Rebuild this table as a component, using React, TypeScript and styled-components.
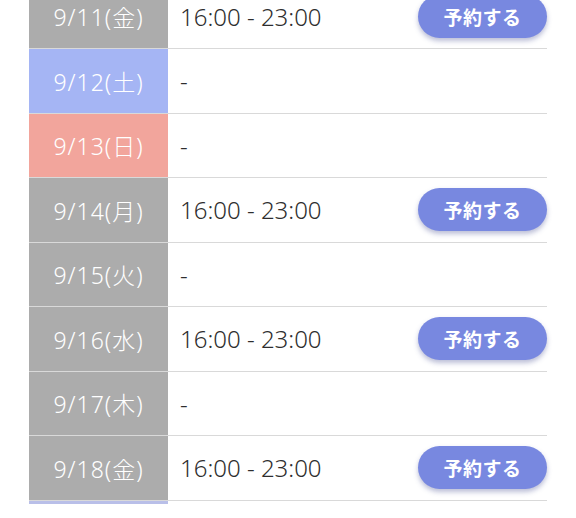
import React from "react";
import styled, { createGlobalStyle } from "styled-components";

const Global = createGlobalStyle`
  html, body { margin: 0; padding: 0; background: #fff; }
  body { width: 576px; height: 518px; overflow: hidden; font-family: "Noto Sans", "Noto Sans CJK JP", sans-serif; }
`;

const Page = styled.div`
  width: 576px;
  height: 518px;
  overflow: hidden;
  padding: 0 29px 0 29px;
  box-sizing: border-box;
`;

const Table = styled.div`
  margin-top: -15.5px;
  display: flex;
  flex-direction: column;
  width: 518px;
`;

type Kind = "weekday" | "sat" | "sun";

const dateBg: Record<Kind, string> = {
  weekday: "#acacac",
  sat: "#a5b5f4",
  sun: "#f2a59c",
};

const Row = styled.div`
  display: grid;
  grid-template-columns: 139px 1fr;
  height: 64.5px;
  box-sizing: border-box;
  border-bottom: 1px solid #d9d9d9;
  flex: none;
`;

const DateCell = styled.div<{ $kind: Kind }>`
  background: ${(p) => dateBg[p.$kind]};
  color: #fff;
  font-family: "Noto Sans", "Noto Sans CJK JP", sans-serif;
  font-size: 23px;
  font-weight: 300;
  letter-spacing: 1px;
  display: flex;
  align-items: center;
  justify-content: center;
`;

const Content = styled.div`
  display: flex;
  align-items: center;
  justify-content: space-between;
  padding-left: 12px;
  color: #2e2e2e;
  font-family: "Noto Sans", "Noto Sans CJK JP", sans-serif;
  font-size: 24px;
  font-weight: 350;
`;

const ReserveButton = styled.button`
  width: 129px;
  height: 43px;
  border: none;
  border-radius: 22px;
  background: #7888e0;
  color: #fff;
  font-family: "Noto Sans CJK JP", sans-serif;
  font-size: 19px;
  font-weight: 700;
  letter-spacing: 0.5px;
  box-shadow: 0 3px 5px rgba(60, 70, 140, 0.35);
  cursor: pointer;
  padding: 0;
`;

const Tail = styled.div`
  height: 3px;
  width: 139px;
  background: #b9bfe8;
`;

type Day = { date: string; kind: Kind; time?: string };

const days: Day[] = [
  { date: "9/11(金)", kind: "weekday", time: "16:00 - 23:00" },
  { date: "9/12(土)", kind: "sat" },
  { date: "9/13(日)", kind: "sun" },
  { date: "9/14(月)", kind: "weekday", time: "16:00 - 23:00" },
  { date: "9/15(火)", kind: "weekday" },
  { date: "9/16(水)", kind: "weekday", time: "16:00 - 23:00" },
  { date: "9/17(木)", kind: "weekday" },
  { date: "9/18(金)", kind: "weekday", time: "16:00 - 23:00" },
];

export default function App() {
  return (
    <>
      <Global />
      <Page>
        <Table>
          {days.map((d) => (
            <Row key={d.date}>
              <DateCell $kind={d.kind}>{d.date}</DateCell>
              <Content>
                <span>{d.time ?? "-"}</span>
                {d.time && <ReserveButton>予約する</ReserveButton>}
              </Content>
            </Row>
          ))}
          <Tail />
        </Table>
      </Page>
    </>
  );
}
